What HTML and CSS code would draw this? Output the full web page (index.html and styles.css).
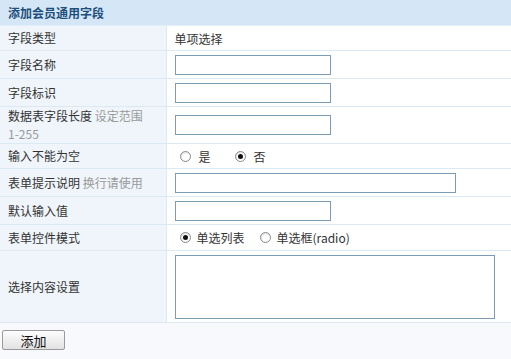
FILE: index.html
```html
<!DOCTYPE html>
<html lang="zh-CN">
<head>
  <meta charset="UTF-8">
  <title>添加会员通用字段</title>
  <link rel="stylesheet" href="styles.css">
</head>
<body>
  <form class="field-form">
    <table class="form-table">
      <colgroup>
        <col class="col-label">
        <col>
      </colgroup>
      <tr class="head-row">
        <th colspan="2">添加会员通用字段</th>
      </tr>
      <tr class="r25">
        <td class="label">字段类型</td>
        <td class="value">单项选择</td>
      </tr>
      <tr class="r28">
        <td class="label">字段名称</td>
        <td class="value"><input type="text" class="ipt"></td>
      </tr>
      <tr class="r28">
        <td class="label">字段标识</td>
        <td class="value"><input type="text" class="ipt"></td>
      </tr>
      <tr class="r37">
        <td class="label">数据表字段长度 <span class="tip">设定范围 <span class="nowrap">1-255</span></span></td>
        <td class="value"><input type="text" class="ipt"></td>
      </tr>
      <tr class="r25">
        <td class="label">输入不能为空</td>
        <td class="value"><label class="opt opt-wide"><input type="radio" name="notnull" value="1"><span>是</span></label><label class="opt"><input type="radio" name="notnull" value="0" checked><span>否</span></label></td>
      </tr>
      <tr class="r28">
        <td class="label">表单提示说明 <span class="tip">换行请使用</span></td>
        <td class="value"><input type="text" class="ipt ipt-long"></td>
      </tr>
      <tr class="r28">
        <td class="label">默认输入值</td>
        <td class="value"><input type="text" class="ipt"></td>
      </tr>
      <tr class="r26">
        <td class="label">表单控件模式</td>
        <td class="value"><label class="opt opt-mid"><input type="radio" name="mode" value="select" checked><span>单选列表</span></label><label class="opt"><input type="radio" name="mode" value="radio"><span>单选框(radio)</span></label></td>
      </tr>
      <tr class="r72">
        <td class="label">选择内容设置</td>
        <td class="value"><textarea class="area"></textarea></td>
      </tr>
    </table>
    <div class="actions">
      <button type="submit" class="btn">添加</button>
    </div>
  </form>
</body>
</html>
```

FILE: styles.css
```css
body {
  margin: 0;
  background-color: #f8f9fc;
  font-family: "Noto Sans CJK SC", "Liberation Sans", sans-serif;
  font-size: 12px;
  color: #333;
}

.form-table {
  width: 100%;
  border-collapse: collapse;
  table-layout: fixed;
}

.col-label {
  width: 166px;
}

.form-table th {
  height: 25px;
  padding: 0 8px;
  background-color: #d5e6f6;
  color: #1d4f7c;
  font-weight: bold;
  text-align: left;
  border-bottom: 1px solid #e3eef7;
}

.form-table td {
  border-bottom: 1px solid #dce9f3;
  vertical-align: middle;
}

.label {
  padding: 0 8px;
  background-color: #eff5fa;
  border-right: 1px solid #dde9f2;
  line-height: 18px;
}

.value {
  padding: 0 0 0 8px;
  background-color: #fff;
}

.tip {
  color: #999;
}

.nowrap {
  white-space: nowrap;
}

.r25 td { height: 24px; }
.r26 td { height: 25px; }
.r28 td { height: 27px; }
.r37 td { height: 36px; }
.r72 td { height: 71px; }

.ipt {
  box-sizing: border-box;
  width: 156px;
  height: 20px;
  margin: 0;
  border: 1px solid #7b9cb2;
  padding: 0 3px;
  font: inherit;
  background: #fff;
  display: block;
}

.ipt-long {
  width: 281px;
}

.area {
  box-sizing: border-box;
  display: block;
  width: 320px;
  height: 64px;
  margin: 0;
  border: 1px solid #7b9cb2;
  resize: none;
  font: inherit;
}

.opt {
  display: inline-flex;
  align-items: center;
  margin-left: 5px;
}

.opt-wide {
  margin-right: 19px;
}

.opt-mid {
  margin-right: 10px;
}

.opt input {
  appearance: none;
  -webkit-appearance: none;
  box-sizing: border-box;
  width: 11px;
  height: 11px;
  margin: 0 6px 0 0;
  border: 1px solid #8a8a8a;
  border-radius: 50%;
  background: radial-gradient(circle at 60% 65%, #fff 40%, #d4d4d4 100%);
  position: relative;
}

.opt-wide input,
.opt-wide + .opt input {
  margin-right: 8px;
}

.opt input:checked::after {
  content: "";
  position: absolute;
  left: 2px;
  top: 2px;
  width: 5px;
  height: 5px;
  border-radius: 50%;
  background: #111;
}

.actions {
  padding: 7px 2px;
}

.btn {
  width: 63px;
  height: 20px;
  padding: 0;
  border: 1px solid #9a9a9a;
  border-radius: 2px;
  background: linear-gradient(#fdfdfd, #e2e2e2);
  font: inherit;
  font-size: 13px;
  color: #111;
}
```
